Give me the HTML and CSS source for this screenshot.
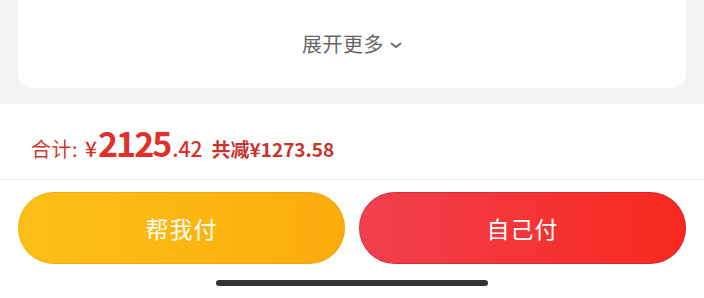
FILE: index.html
```html
<!DOCTYPE html>
<html lang="zh-CN">
<head>
<meta charset="utf-8">
<link rel="stylesheet" href="styles.css">
</head>
<body>
<div class="top">
  <div class="card">
    <div class="more">展开更多<svg class="chev" width="12" height="7" viewBox="0 0 12 7"><path d="M1.5 1.5 L6 5 L10.5 1.5" fill="none" stroke="#666" stroke-width="1.8" stroke-linecap="round" stroke-linejoin="round"/></svg></div>
  </div>
</div>
<div class="bottom">
  <div class="total">
    <span class="label">合计:</span>
    <span class="yen">¥</span><span class="big">2125</span><span class="dec">.42</span>
    <span class="save">共减¥1273.58</span>
  </div>
  <div class="actions">
    <button class="btn btn-help">帮我付</button>
    <button class="btn btn-self">自己付</button>
  </div>
  <div class="home"><div class="bar"></div></div>
</div>
</body>
</html>
```
FILE: styles.css
```css
* { box-sizing: border-box; }
html, body { margin: 0; padding: 0; }
body {
  width: 704px;
  height: 298px;
  overflow: hidden;
  background: #fff;
  font-family: "Noto Sans CJK SC", "Noto Sans", sans-serif;
}
.top {
  background: #f3f3f3;
  height: 104px;
  padding: 0 18px;
}
.card {
  background: #fff;
  height: 88px;
  border-radius: 0 0 14px 14px;
  display: flex;
  align-items: flex-start;
  justify-content: center;
  padding-top: 30px;
}
.more {
  display: flex;
  align-items: center;
  font-size: 20px;
  line-height: 28px;
  color: #666;
  letter-spacing: 0.5px;
}
.chev { margin-left: 6px; margin-top: 3px; }
.total {
  height: 76px;
  border-bottom: 1px solid #f0f0f0;
  display: flex;
  align-items: baseline;
  padding-left: 31px;
  padding-top: 18px;
  color: #cf3a2e;
}
.label { font-size: 20px; margin-right: 7px; letter-spacing: 0.5px; }
.yen { font-size: 21px; font-weight: 500; color: #d9342a; }
.big { font-size: 34px; font-weight: 700; color: #e0302a; letter-spacing: -2px; line-height: 42px; margin-left: 1px; }
.dec { font-size: 21px; font-weight: 500; color: #d9342a; margin-left: 2px; }
.save { font-size: 19px; font-weight: 700; margin-left: 9px; color: #c8332b; }
.actions {
  display: flex;
  gap: 14px;
  padding: 12px 18px 0;
}
.btn {
  flex: 1;
  height: 72px;
  border-radius: 36px;
  border: none;
  color: #fff;
  font-family: inherit;
  font-size: 23px;
  letter-spacing: 1px;
}
.btn-help {
  background: linear-gradient(90deg, #fcc017, #fbac0c);
  box-shadow: inset 0 0 0 1px rgba(220,150,0,0.35);
}
.btn-self {
  background: linear-gradient(90deg, #f1404f, #f8291d);
  box-shadow: inset 0 0 0 1px rgba(170,30,40,0.4);
}
.home {
  display: flex;
  justify-content: center;
  padding-top: 16px;
}
.bar {
  width: 272px;
  height: 6px;
  border-radius: 3px;
  background: #333;
}
```
